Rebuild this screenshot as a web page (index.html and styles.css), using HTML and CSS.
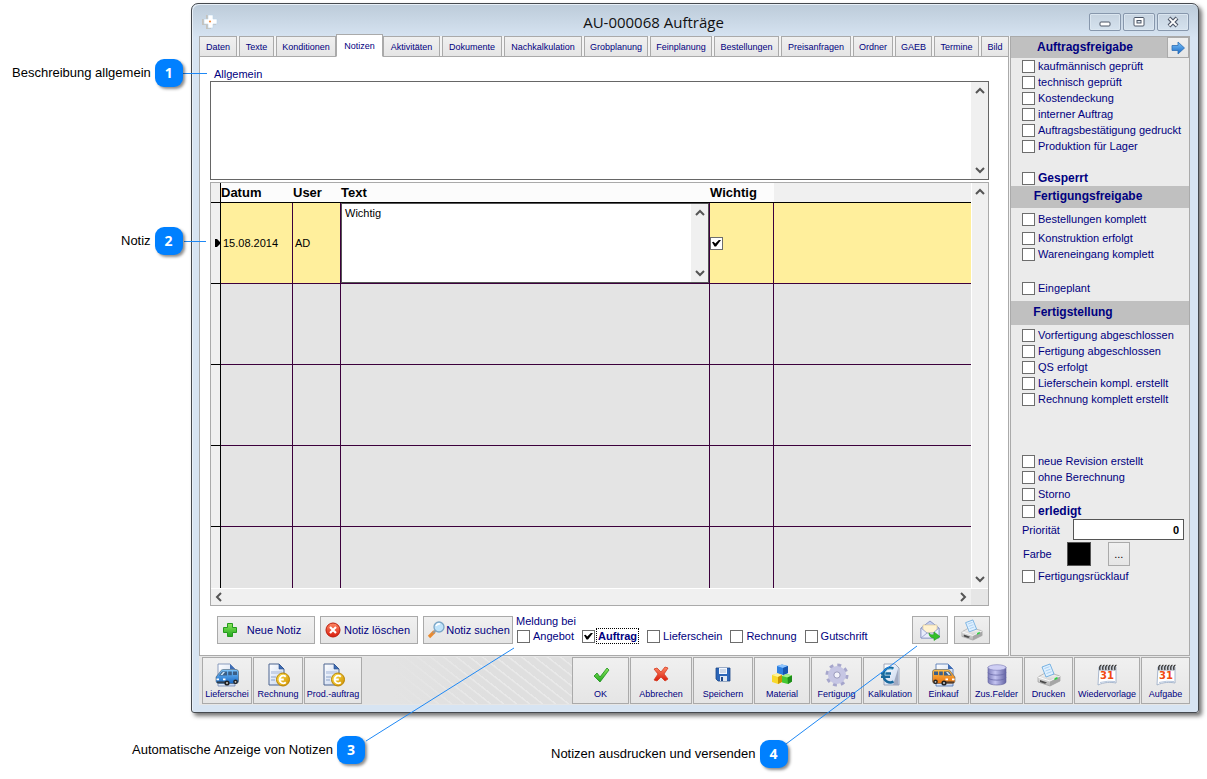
FILE: index.html
```html
<!DOCTYPE html>
<html lang="de">
<head>
<meta charset="utf-8">
<title>AU-000068 Aufträge</title>
<meta name="viewport" content="width=device-width, initial-scale=1">
<link rel="stylesheet" href="styles.css">
</head>
<body>
<svg class="defs" aria-hidden="true">
  <defs>
    <linearGradient id="gPaper" x1="0" y1="0" x2="1" y2="1"><stop offset="0" stop-color="#fff"/><stop offset="1" stop-color="#c3d3ee"/></linearGradient>
    <linearGradient id="gGold" x1="0" y1="0" x2="1" y2="1"><stop offset="0" stop-color="#ffe34d"/><stop offset="1" stop-color="#cf8f00"/></linearGradient>
    <linearGradient id="gGreen" x1="0" y1="0" x2="0" y2="1"><stop offset="0" stop-color="#8be65c"/><stop offset="1" stop-color="#22a81e"/></linearGradient>
    <linearGradient id="gRed" x1="0" y1="0" x2="0" y2="1"><stop offset="0" stop-color="#ff8a66"/><stop offset="1" stop-color="#d81b0c"/></linearGradient>
    <linearGradient id="gBlue" x1="0" y1="0" x2="0" y2="1"><stop offset="0" stop-color="#7cc4fb"/><stop offset="1" stop-color="#1767c4"/></linearGradient>
    <linearGradient id="gOrange" x1="0" y1="0" x2="0" y2="1"><stop offset="0" stop-color="#ffc04a"/><stop offset="1" stop-color="#e8700c"/></linearGradient>
    <linearGradient id="gGrey" x1="0" y1="0" x2="0" y2="1"><stop offset="0" stop-color="#fff"/><stop offset="1" stop-color="#b4b4b4"/></linearGradient>
    <linearGradient id="gLilac" x1="0" y1="0" x2="1" y2="0"><stop offset="0" stop-color="#7c7cb8"/><stop offset=".4" stop-color="#c4c4f2"/><stop offset="1" stop-color="#6464a4"/></linearGradient>
    <symbol id="doc-euro" viewBox="0 0 24 24">
      <path d="M3 1h10l5 5v16H3z" fill="url(#gPaper)" stroke="#4d6490" stroke-width="1"/>
      <path d="M13 1v5h5z" fill="#3e6db5" stroke="#2b4f8c" stroke-width=".6"/>
      <path d="M5 8h11v3H5z" fill="#c6d2e8"/>
      <path d="M5 14h5M5 17h4" stroke="#8ba2c8" stroke-width="1"/>
      <circle cx="17" cy="16.500" r="6.500" fill="url(#gGold)" stroke="#b98200"/>
      <path d="M19.800 13.800a3.700 3.700 0 1 0 0 5.400M13 16.500h4.800" fill="none" stroke="#fff" stroke-width="1.900"/>
    </symbol>
    <symbol id="van" viewBox="0 0 24 24">
      <path d="M1 14l4-5c1-2 2-2.500 4-2.500h12c1.500 0 2.500 1 2.500 2.500v9c0 1.500-1 2.500-2.500 2.500H4c-2 0-3-1-3-3z" stroke="#345" stroke-width=".5"/>
      <path d="M4 12.500L7 8.500h5v4zM13.200 8.500h3.600v3.800h-3.600zM18 8.500h4v3.600h-4z" fill="#3c5f86"/>
      <path d="M5.500 12L8 9h2l-2.500 3z" fill="#cfe8fa"/>
      <path d="M1.500 15.500h2.500v1.800H1.500zM8 15.500h2.500v1.800H8z" fill="#fff"/>
      <path d="M2 18.500h9v1.300H2z" fill="#333"/>
      <circle cx="12" cy="20" r="2.600" fill="#222"/><circle cx="12" cy="20" r="1" fill="#ccc"/>
      <circle cx="20.500" cy="18.800" r="2.300" fill="#222"/><circle cx="20.500" cy="18.800" r=".9" fill="#ccc"/>
    </symbol>
    <symbol id="printer" viewBox="0 0 24 24">
      <path d="M1 14l9-5 13 4v5l-10 5-12-4z" fill="url(#gGrey)" stroke="#a0a0a0" stroke-width=".7"/>
      <path d="M13 18l10-5v5l-10 5z" fill="#a6a6a6"/>
      <path d="M1 14l12 4 10-5" fill="none" stroke="#fff" stroke-width=".9"/>
      <path d="M5 4l8-3 4 10-8 3z" fill="#dff0ff" stroke="#5aa2dc" stroke-width=".8"/>
      <path d="M7.500 5.500l5-1.800M8.500 8l5-1.800M9.500 10.500l5-1.800" stroke="#9cc8ee" stroke-width=".8"/>
      <path d="M3 17l7 2.400-2 1.300-5-1.700z" fill="#4c4c4c"/>
      <path d="M17.500 15.300l3-1.500v2l-3 1.500z" fill="#2fd142"/>
    </symbol>
    <symbol id="calendar" viewBox="0 0 24 24">
      <path d="M4 4h17v16c-5-1-12-1-18 2z" fill="#fff" stroke="#9fb0c8" stroke-width=".9"/>
      <path d="M4 4h17v4H4z" fill="#c9ced6"/>
      <path d="M5 7q-1-4 1.500-5M8 7q-1-4 1.500-5M11 7q-1-4 1.500-5M14 7q-1-4 1.500-5M17 7q-1-4 1.500-5M20 7q-1-4 1.500-5" fill="none" stroke="#333" stroke-width="1.300"/>
      <path d="M5 19.500q8-2 15-1" fill="none" stroke="#b8c8de" stroke-width="1"/>
      <text x="12" y="16" text-anchor="middle" class="cal-day">31</text>
    </symbol>
    <symbol id="up" viewBox="0 0 16 16"><path d="M4 10l4-4 4 4" fill="none" stroke="#555" stroke-width="2"/></symbol>
    <symbol id="down" viewBox="0 0 16 16"><path d="M4 6l4 4 4-4" fill="none" stroke="#555" stroke-width="2"/></symbol>
    <symbol id="left" viewBox="0 0 16 16"><path d="M10 4L6 8l4 4" fill="none" stroke="#555" stroke-width="2"/></symbol>
    <symbol id="right" viewBox="0 0 16 16"><path d="M6 4l4 4-4 4" fill="none" stroke="#555" stroke-width="2"/></symbol>
  </defs>
</svg>

<main class="stage">
  <section class="window">
    <header class="titlebar">
      <svg class="app-icon" viewBox="0 0 16 16"><path d="M5 1h6v4h4v6h-5v4H5v-4H1V5h4z" fill="#c5c2bc" transform="translate(-1 0)"/><path d="M6 1h5v4h4v5h-4v4H6v-4H2V5h4z" fill="#fff" stroke="#b8d5ea" stroke-width=".6"/><circle cx="8" cy="7.500" r="1.100" fill="#f08a3c"/></svg>
      <h1 class="title">AU-000068 Aufträge</h1>
      <div class="win-buttons">
        <button class="win-button" aria-label="Minimieren"><svg viewBox="0 0 14 12"><rect x="2" y="6" width="10" height="4" rx="1" fill="#fff" stroke="#4c5666"/></svg></button>
        <button class="win-button" aria-label="Maximieren"><svg viewBox="0 0 14 12"><rect x="2" y="1.500" width="10" height="8.500" rx="1" fill="#fff" stroke="#4c5666"/><rect x="5" y="4.500" width="4" height="2.500" fill="#dbe6f1" stroke="#4c5666"/></svg></button>
        <button class="win-button" aria-label="Schließen"><svg viewBox="0 0 14 12"><path d="M3 2l8 8M11 2l-8 8" stroke="#4c5666" stroke-width="4"/><path d="M3.400 2.400l7.200 7.200M10.600 2.400l-7.200 7.200" stroke="#fff" stroke-width="2"/></svg></button>
      </div>
    </header>

    <div class="workspace">
      <div class="main">
        <nav class="tabs">
          <button class="tab">Daten</button>
          <button class="tab">Texte</button>
          <button class="tab tab-joined">Konditionen</button>
          <button class="tab tab-active">Notizen</button>
          <button class="tab">Aktivitäten</button>
          <button class="tab">Dokumente</button>
          <button class="tab">Nachkalkulation</button>
          <button class="tab">Grobplanung</button>
          <button class="tab">Feinplanung</button>
          <button class="tab">Bestellungen</button>
          <button class="tab">Preisanfragen</button>
          <button class="tab">Ordner</button>
          <button class="tab">GAEB</button>
          <button class="tab">Termine</button>
          <button class="tab tab-joined">Bild</button>
        </nav>

        <div class="panel">
          <label class="field-label" for="allgemein">Allgemein</label>
          <div class="memo">
            <textarea id="allgemein" class="memo-text"></textarea>
            <div class="vscroll"><svg><use href="#up"/></svg><svg><use href="#down"/></svg></div>
          </div>

          <div class="grid">
            <div class="grid-body">
              <table class="notes">
                <colgroup><col class="c-mark"><col class="c-date"><col class="c-user"><col><col class="c-flag"><col class="c-rest"></colgroup>
                <thead><tr><th class="mark"></th><th>Datum</th><th>User</th><th>Text</th><th>Wichtig</th><th class="blank"></th></tr></thead>
                <tbody>
                  <tr class="current">
                    <td class="mark"><svg class="pointer" viewBox="0 0 6 8"><path d="M0 0h2l4 4-4 4H0z"/></svg></td>
                    <td>15.08.2014</td><td>AD</td>
                    <td class="memo-cell"><div class="memo memo-inline"><textarea class="memo-text" aria-label="Text">Wichtig</textarea><div class="vscroll"><svg><use href="#up"/></svg><svg><use href="#down"/></svg></div></div></td>
                    <td class="flag-cell"><input type="checkbox" class="check" aria-label="Wichtig" checked></td><td></td>
                  </tr>
                  <tr><td class="mark"></td><td></td><td></td><td></td><td></td><td></td></tr>
                  <tr><td class="mark"></td><td></td><td></td><td></td><td></td><td></td></tr>
                  <tr><td class="mark"></td><td></td><td></td><td></td><td></td><td></td></tr>
                  <tr class="last"><td class="mark"></td><td></td><td></td><td></td><td></td><td></td></tr>
                </tbody>
              </table>
              <div class="vscroll"><svg><use href="#up"/></svg><svg><use href="#down"/></svg></div>
            </div>
            <div class="hscroll"><div class="hscroll-track"><svg><use href="#left"/></svg><svg><use href="#right"/></svg></div><div class="corner"></div></div>
          </div>

          <div class="actions">
            <button class="action"><svg viewBox="0 0 16 16"><path d="M5.500 1.500h5v4h4v5h-4v4h-5v-4h-4v-5h4z" fill="url(#gGreen)" stroke="#259a1e"/></svg><span>Neue Notiz</span></button>
            <button class="action"><svg viewBox="0 0 16 16"><circle cx="8" cy="8" r="7" fill="url(#gRed)" stroke="#bb1c0c"/><path d="M5 5l6 6M11 5l-6 6" stroke="#fff" stroke-width="2.200"/></svg><span>Notiz löschen</span></button>
            <button class="action action-search"><svg viewBox="0 0 18 18"><path d="M2 16l5.500-5.500" stroke="#e88a30" stroke-width="3.200"/><path d="M6 12l2.500-2.500" stroke="#999" stroke-width="2"/><circle cx="12" cy="6" r="5" fill="#bfe3fa" stroke="#7ba6c6" stroke-width="1.300"/><path d="M9 5a3.500 3.500 0 0 1 4-2" fill="none" stroke="#fff" stroke-width="1.500"/></svg><span>Notiz suchen</span></button>
            <div class="notify" role="group" aria-labelledby="meldung">
              <span id="meldung" class="notify-title">Meldung bei</span>
              <div class="notify-options">
                <label class="option"><input type="checkbox" class="check">Angebot</label>
                <label class="option option-focus"><input type="checkbox" class="check" checked><b>Auftrag</b></label>
                <label class="option"><input type="checkbox" class="check">Lieferschein</label>
                <label class="option"><input type="checkbox" class="check">Rechnung</label>
                <label class="option"><input type="checkbox" class="check">Gutschrift</label>
              </div>
            </div>
            <button class="icon-button" aria-label="Notiz versenden"><svg viewBox="0 0 22 22"><path d="M2 9l9-7 9 7v10H2z" fill="#c3cdee" stroke="#8f9bc8"/><path d="M4 6h14v8H4z" fill="#fff2d0" stroke="#d8c48e" stroke-width=".6"/><path d="M2 9l6 5h6l6-5v10H2z" fill="#e8ecfb" stroke="#8f9bc8" stroke-width=".8"/><path d="M2 19l6-5M20 19l-6-5" stroke="#8f9bc8" stroke-width=".8"/><path d="M10 14c1 2 3 2 5 1.500V13l6 4.500-6 4V19c-3 0-5-2-5-5z" fill="#35c02a" stroke="#239a1c" stroke-width=".6"/></svg></button>
            <button class="icon-button" aria-label="Notiz drucken"><svg><use href="#printer"/></svg></button>
          </div>
        </div>
      </div>

      <aside class="sidebar">
        <h2 class="side-head"><span>Auftragsfreigabe</span><button class="next" aria-label="Weiter"><svg viewBox="0 0 14 14"><path d="M1 4.500h6V1l6.500 6L7 13V9.500H1z" fill="url(#gBlue)" stroke="#2d6fb5" stroke-width=".8"/></svg></button></h2>
        <div class="side-list">
          <label class="side-check"><input type="checkbox" class="check">kaufmännisch geprüft</label>
          <label class="side-check"><input type="checkbox" class="check">technisch geprüft</label>
          <label class="side-check"><input type="checkbox" class="check">Kostendeckung</label>
          <label class="side-check"><input type="checkbox" class="check">interner Auftrag</label>
          <label class="side-check"><input type="checkbox" class="check">Auftragsbestätigung gedruckt</label>
          <label class="side-check"><input type="checkbox" class="check">Produktion für Lager</label>
          <label class="side-check side-strong side-gap"><input type="checkbox" class="check">Gesperrt</label>
        </div>
        <h2 class="side-head">Fertigungsfreigabe</h2>
        <div class="side-list side-list-release">
          <label class="side-check"><input type="checkbox" class="check">Bestellungen komplett</label>
          <label class="side-check side-near"><input type="checkbox" class="check">Konstruktion erfolgt</label>
          <label class="side-check"><input type="checkbox" class="check">Wareneingang komplett</label>
          <label class="side-check side-gap"><input type="checkbox" class="check">Eingeplant</label>
        </div>
        <h2 class="side-head side-head-tall">Fertigstellung</h2>
        <div class="side-list side-list-done">
          <label class="side-check"><input type="checkbox" class="check">Vorfertigung abgeschlossen</label>
          <label class="side-check"><input type="checkbox" class="check">Fertigung abgeschlossen</label>
          <label class="side-check"><input type="checkbox" class="check">QS erfolgt</label>
          <label class="side-check"><input type="checkbox" class="check">Lieferschein kompl. erstellt</label>
          <label class="side-check"><input type="checkbox" class="check">Rechnung komplett erstellt</label>
        </div>
        <div class="side-list side-list-state">
          <label class="side-check"><input type="checkbox" class="check">neue Revision erstellt</label>
          <label class="side-check"><input type="checkbox" class="check">ohne Berechnung</label>
          <label class="side-check side-step"><input type="checkbox" class="check">Storno</label>
          <label class="side-check side-step side-strong"><input type="checkbox" class="check">erledigt</label>
        </div>
        <div class="side-field"><label for="prio">Priorität</label><input id="prio" class="prio" type="text" value="0"></div>
        <div class="side-field side-color"><span>Farbe</span><span class="swatch"></span><button class="more" aria-label="Farbe wählen">...</button></div>
        <div class="side-list"><label class="side-check"><input type="checkbox" class="check">Fertigungsrücklauf</label></div>
      </aside>
    </div>

    <footer class="toolbar">
      <div class="tools-left">
        <button class="tool"><svg viewBox="0 0 24 24"><path d="M3 1h12l5 5v17H3z" fill="url(#gPaper)" stroke="#6f86b0" stroke-width=".8"/><path d="M15 1v5h5z" fill="#3e6db5"/><use href="#van" fill="url(#gBlue)"/></svg><span>Lieferschei</span></button>
        <button class="tool"><svg><use href="#doc-euro"/></svg><span>Rechnung</span></button>
        <button class="tool tool-wide"><svg><use href="#doc-euro"/></svg><span>Prod.-auftrag</span></button>
      </div>
      <div class="tools-space"></div>
      <div class="tools-right">
        <button class="tool"><svg viewBox="0 0 24 24"><path d="M5 13l3-3 3 4 7-9 2 2-9 12z" fill="url(#gGreen)" stroke="#1a8f1a" stroke-width=".8"/></svg><span>OK</span></button>
        <button class="tool"><svg viewBox="0 0 24 24"><path d="M5 6l3-1 4 4 4-5 3 1-4 6 4 5-3 2-4-4-4 4-3-1 4-6z" fill="url(#gRed)" stroke="#d43a20" stroke-width=".8"/></svg><span>Abbrechen</span></button>
        <button class="tool"><svg viewBox="0 0 24 24"><path d="M5 5h14v13H7l-2-2z" fill="#2c66b8" stroke="#1c4788" stroke-width=".8"/><path d="M8 5h8v6H8z" fill="#f2f7ff"/><path d="M9 7h6M9 9h6" stroke="#98a9c4" stroke-width=".8"/><path d="M9 13h7v5H9z" fill="#dfe6f0"/><path d="M10 14h2v4h-2z" fill="#1c4788"/></svg><span>Speichern</span></button>
        <button class="tool"><svg viewBox="0 0 24 24"><path d="M7 3l5-1.500L18 3v7l-5 2-6-2z" fill="#2d7fe0"/><path d="M7 3l5-1.500L18 3l-5 2z" fill="#8ec5ff"/><path d="M13 5l5-2v7l-5 2z" fill="#1656b0"/><path d="M2 12l5-1.500 5 1.500v7l-4 2-6-2z" fill="#f8d92c"/><path d="M2 12l5-1.500 5 1.500-4 2z" fill="#fff39a"/><path d="M8 14l4-2v7l-4 2z" fill="#c99400"/><path d="M12 13l5-2 5 1.500v6L18 21l-6-1.500z" fill="#45c832"/><path d="M12 13l5-2 5 1.500-4.500 2z" fill="#a8f08c"/><path d="M17.500 14.500l4.500-2v6L18 21z" fill="#1e8d1a"/></svg><span>Material</span></button>
        <button class="tool"><svg viewBox="0 0 24 24"><circle cx="12" cy="12" r="9.800" fill="none" stroke="#a6a6cc" stroke-width="3.400" stroke-dasharray="3.800 3.900"/><circle cx="12" cy="12" r="6.200" fill="none" stroke="#c6c6e4" stroke-width="5.600"/><circle cx="12" cy="12" r="3.200" fill="#f3f3fa" stroke="#9292ba"/></svg><span>Fertigung</span></button>
        <button class="tool"><svg viewBox="0 0 24 24"><path d="M6 1h11l4 4v17H6z" fill="url(#gPaper)" stroke="#8a96ac" stroke-width=".8"/><path d="M20 6v16h-5z" fill="#a2aac0"/><path d="M15.500 5.500c-4-2-10 0-10 6.500s6 9 10 6.500M3 10.500h10M3 13.800h9" fill="none" stroke="#17689c" stroke-width="2.400"/><path d="M15 6.500c-4-1.500-8 0-8 5.500" fill="none" stroke="#7cc7e4"/></svg><span>Kalkulation</span></button>
        <button class="tool"><svg viewBox="0 0 24 24"><path d="M4 1h12l5 5v17H4z" fill="url(#gPaper)" stroke="#4870b0" stroke-width=".8"/><path d="M16 1v5h5z" fill="#3e6db5"/><use href="#van" fill="url(#gOrange)" transform="translate(24 0) scale(-1 1)"/></svg><span>Einkauf</span></button>
        <button class="tool"><svg viewBox="0 0 24 24"><path d="M3 4v15c0 4 18 4 18 0V4z" fill="url(#gLilac)" stroke="#6262a0" stroke-width=".6"/><ellipse cx="12" cy="4.500" rx="9" ry="2.800" fill="#cfcff4" stroke="#7a7ab6" stroke-width=".6"/><path d="M3 9.500c0 3.500 18 3.500 18 0M3 14.500c0 3.500 18 3.500 18 0" fill="none" stroke="#6a6aa8" stroke-width=".8"/></svg><span>Zus.Felder</span></button>
        <button class="tool"><svg><use href="#printer"/></svg><span>Drucken</span></button>
        <button class="tool"><svg><use href="#calendar"/></svg><span>Wiedervorlage</span></button>
        <button class="tool"><svg><use href="#calendar"/></svg><span>Aufgabe</span></button>
      </div>
    </footer>
  </section>

  <svg class="leads" aria-hidden="true"><path d="M183 73.500h24M184 241.500h22M366 741l148-93M786 744l131-98"/></svg>
  <div class="callout callout-1"><span>Beschreibung allgemein</span><b class="badge">1</b></div>
  <div class="callout callout-2"><span>Notiz</span><b class="badge">2</b></div>
  <div class="callout callout-3"><span>Automatische Anzeige von Notizen</span><b class="badge">3</b></div>
  <div class="callout callout-4"><span>Notizen ausdrucken und versenden</span><b class="badge">4</b></div>
</main>
</body>
</html>
```
FILE: styles.css
```css
* { box-sizing: border-box; }
body { margin: 0; background: #fff; font: 11px/14px "Liberation Sans", Arial, sans-serif; color: #000080; }
button, input, textarea { font: inherit; color: inherit; margin: 0; padding: 0; }
button { border: 1px solid #aaa; background: linear-gradient(#f0f0f0, #e5e5e5); white-space: nowrap; }
svg { display: block; flex: none; }
.defs { position: absolute; width: 0; height: 0; }
.cal-day { font: bold 10px "DejaVu Sans", sans-serif; fill: #f04a10; }

.stage { position: relative; min-height: 100vh; padding: 3px 8px 66px 191px; }

/* Window frame */
.window {
  border: 1px solid #45494e; border-radius: 7px 7px 3px 3px;
  padding: 0 8px 7px 7px;
  background: linear-gradient(#bccbd9, #d7e4f2 34px);
  box-shadow: inset 1px 1px 0 #e8f0f8, 3px 3px 4px rgba(0, 0, 0, .55);
}
.titlebar { display: flex; align-items: center; height: 32px; padding: 4px 1px 0 3px; }
.app-icon { width: 16px; height: 16px; }
.title { flex: 1; margin: 0; text-align: center; font: 15px/20px "Open Sans", "Noto Sans", sans-serif; color: #111; }
.win-buttons { display: flex; gap: 2px; }
.win-button {
  display: flex; align-items: center; justify-content: center; width: 32px; height: 18px;
  border-color: #8797ac; border-radius: 2px;
  background: linear-gradient(#c6d3e0, #d5e2ee); box-shadow: inset 0 0 0 1px #dbe6f0;
}
.win-button svg { width: 14px; height: 12px; }
.workspace { display: flex; gap: 1px; background: #f4f4f4; }
.main { flex: 1; min-width: 0; display: flex; flex-direction: column; }

/* Tabs */
.tabs {
  display: grid; height: 21px;
  grid-template-columns: 40fr 37fr 60fr 47fr 59fr 62fr 80fr 66fr 64fr 67fr 72fr 42fr 39fr 47fr 28fr;
  background: linear-gradient(#aaa, #aaa) bottom / 100% 1px no-repeat;
}
.tab { min-width: 0; margin-right: 2px; font-size: 9px; line-height: 18px; }
.tab-joined { margin-right: 0; }
.tab-active { margin: -2px 0 0; border-bottom-color: #fff; background: #fff; }

.panel { flex: 1; border: 1px solid #aaa; border-top: 0; padding: 10px 19px 0 10px; background: #fff; }
.field-label { display: block; padding-left: 4px; }

/* Text boxes and scroll bars */
.memo { display: flex; height: 99px; border: 1px solid #666; background: #fff; }
.memo-text { flex: 1; min-width: 0; border: 0; outline: 0; resize: none; overflow: hidden; background: none; padding: 2px 3px; color: #000; }
.vscroll { flex: none; width: 17px; display: flex; flex-direction: column; align-items: center; justify-content: space-between; padding: 1px 0; background: #f0f0f0; }
.vscroll svg, .hscroll svg { width: 16px; height: 16px; }
.hscroll { display: flex; height: 17px; background: #f0f0f0; border-top: 1px solid #fff; }
.hscroll-track { flex: 1; display: flex; justify-content: space-between; }
.corner { width: 17px; background: #e6e6e6; }

/* Notes table */
.grid { margin-top: 2px; border: 1px solid #aaa; }
.grid-body { display: flex; }
.grid-body > .vscroll { border-left: 1px solid #fff; }
.notes { flex: 1; width: 100%; table-layout: fixed; border-collapse: separate; border-spacing: 0; color: #000; }
.c-mark { width: 10px; }
.c-date { width: 72px; }
.c-user { width: 48px; }
.c-flag { width: 64px; }
.c-rest { width: 197px; }
.notes th { height: 20px; padding: 0; border-bottom: 1px solid #000; background: #fcfcfc; text-align: left; font-size: 13px; line-height: 18px; }
.notes th.blank { background: #f0f0f0; }
.notes td { height: 81px; padding: 0 2px; border-right: 1px solid #3c003c; border-bottom: 1px solid #3c003c; background: #e4e4e4; }
.notes td:last-child { border-right: 0; }
.notes .current td { background: #ffef9c; }
.notes .last td { height: 61px; border-bottom: 0; }
.notes .mark { padding: 0; border-right: 1px solid #000; border-bottom-color: #000; background: #f0f0f0; }
.notes .current .mark { background: #f0f0f0; }
.pointer { width: 6px; height: 8px; margin-left: 4px; }
.notes .memo-cell, .notes .flag-cell { padding: 0; }
.memo-inline { height: 80px; border-color: #555; }

/* Check boxes */
.check { appearance: none; flex: none; display: block; position: relative; width: 13px; height: 13px; border: 1px solid #6d6d6d; background: #fff; }
.check:checked::before {
  content: ""; position: absolute; inset: 2px 1px; background: #000;
  clip-path: polygon(0 40%, 18% 32%, 36% 56%, 82% 0, 100% 8%, 45% 100%, 28% 100%);
}

/* Note actions */
.actions { display: flex; align-items: flex-start; gap: 5px; margin-right: -1px; padding: 10px 0 11px 7px; }
.action { display: flex; align-items: center; width: 98px; height: 28px; padding: 0 4px; }
.action svg { width: 16px; height: 16px; }
.action span { flex: 1; text-align: center; }
.action-search { width: 90px; padding: 0 1px 0 3px; }
.action-search svg { width: 18px; height: 18px; }
.notify { flex: 1; margin-left: -2px; }
.notify-title { display: block; line-height: 10px; }
.notify-options { display: flex; gap: 8px; padding: 2px 0 0 1px; }
.option { display: flex; align-items: center; gap: 3px; height: 16px; }
.option-focus { gap: 1px; }
.option-focus b { border: 1px dotted #000; padding: 0 1px; line-height: 14px; }
.icon-button { display: flex; align-items: center; justify-content: center; width: 36px; height: 28px; }
.icon-button svg { width: 22px; height: 22px; }
.icon-button:last-child { margin-left: 1px; }

/* Release sidebar */
.sidebar { width: 180px; border: 1px solid #aaa; background: #ebebeb; }
.side-head { display: flex; align-items: center; justify-content: center; position: relative; height: 22px; margin: 0; padding: 0 24px 2px 0; background: #c0c0c0; font-size: 12px; }
.side-head:first-child { height: 21px; padding-right: 30px; }
.side-head-tall { height: 24px; padding-right: 54px; }
.next { position: absolute; right: 0; top: 0; width: 22px; height: 21px; display: flex; align-items: center; justify-content: center; }
.next svg { width: 14px; height: 14px; }
.side-list { padding-left: 11px; }
.side-check { display: flex; align-items: center; gap: 3px; height: 16px; white-space: nowrap; }
.side-gap { margin-top: 16px; }
.side-near { margin-top: 3px; }
.side-step { margin-top: 1px; }
.side-strong { font-size: 12px; font-weight: bold; }
.side-list-release { padding-top: 3px; padding-bottom: 5px; }
.side-list-release .side-gap { margin-top: 18px; }
.side-list-done { padding-top: 2px; }
.side-list-state { padding-top: 46px; }
.side-field { display: flex; align-items: center; justify-content: space-between; padding: 0 5px 0 11px; }
.prio { width: 111px; height: 21px; border: 1px solid #555; background: #fff; padding: 0 4px; text-align: right; font-weight: bold; color: #000; }
.side-color { justify-content: flex-start; padding: 2px 0 2px 12px; }
.swatch { width: 24px; height: 24px; margin: 0 17px 0 15px; border: 1px solid #555; background: #000; }
.more { width: 22px; height: 24px; color: #000; }

/* Bottom tool bar */
.toolbar { display: flex; align-items: stretch; padding: 1px 0 1px 3px; background: #e6e6e6; }
.tools-left { display: flex; gap: 1px; }
.tools-left .tool { width: 50px; }
.tools-left .tool-wide { width: 58px; }
.tools-space { flex: 1; background: linear-gradient(90deg, #e3e3e3 15%, transparent 60%), repeating-linear-gradient(38deg, #dfdfdf 0 6px, #e9e9e9 7px 8px); }
.tools-right { display: grid; grid-template-columns: 57px 62px 60px 56px 51px 54px 51px 53px 49px 66px 49px; gap: 1px; }
.tool { display: flex; flex-direction: column; align-items: center; height: 47px; padding: 5px 0 0; overflow: hidden; font-size: 9px; line-height: 12px; }
.tool svg { width: 24px; height: 24px; }
.tool span { margin-top: 1px; }

/* Callouts */
.leads { position: absolute; inset: 0; width: 100%; height: 100%; pointer-events: none; fill: none; stroke: #1e88f5; stroke-width: 1; }
.callout { position: absolute; display: flex; align-items: center; gap: 4px; color: #000; font-size: 13px; white-space: nowrap; }
.callout-1 { left: 12px; top: 59px; }
.callout-2 { left: 121px; top: 227px; }
.callout-3 { left: 132px; top: 736px; }
.callout-4 { left: 551px; top: 740px; }
.badge { width: 28px; height: 28px; border-radius: 9px; background: #0080ff; box-shadow: 2px 2px 3px rgba(0, 0, 0, .45); color: #fff; text-align: center; font: bold 14px/28px "Open Sans", "Noto Sans", sans-serif; }
```
